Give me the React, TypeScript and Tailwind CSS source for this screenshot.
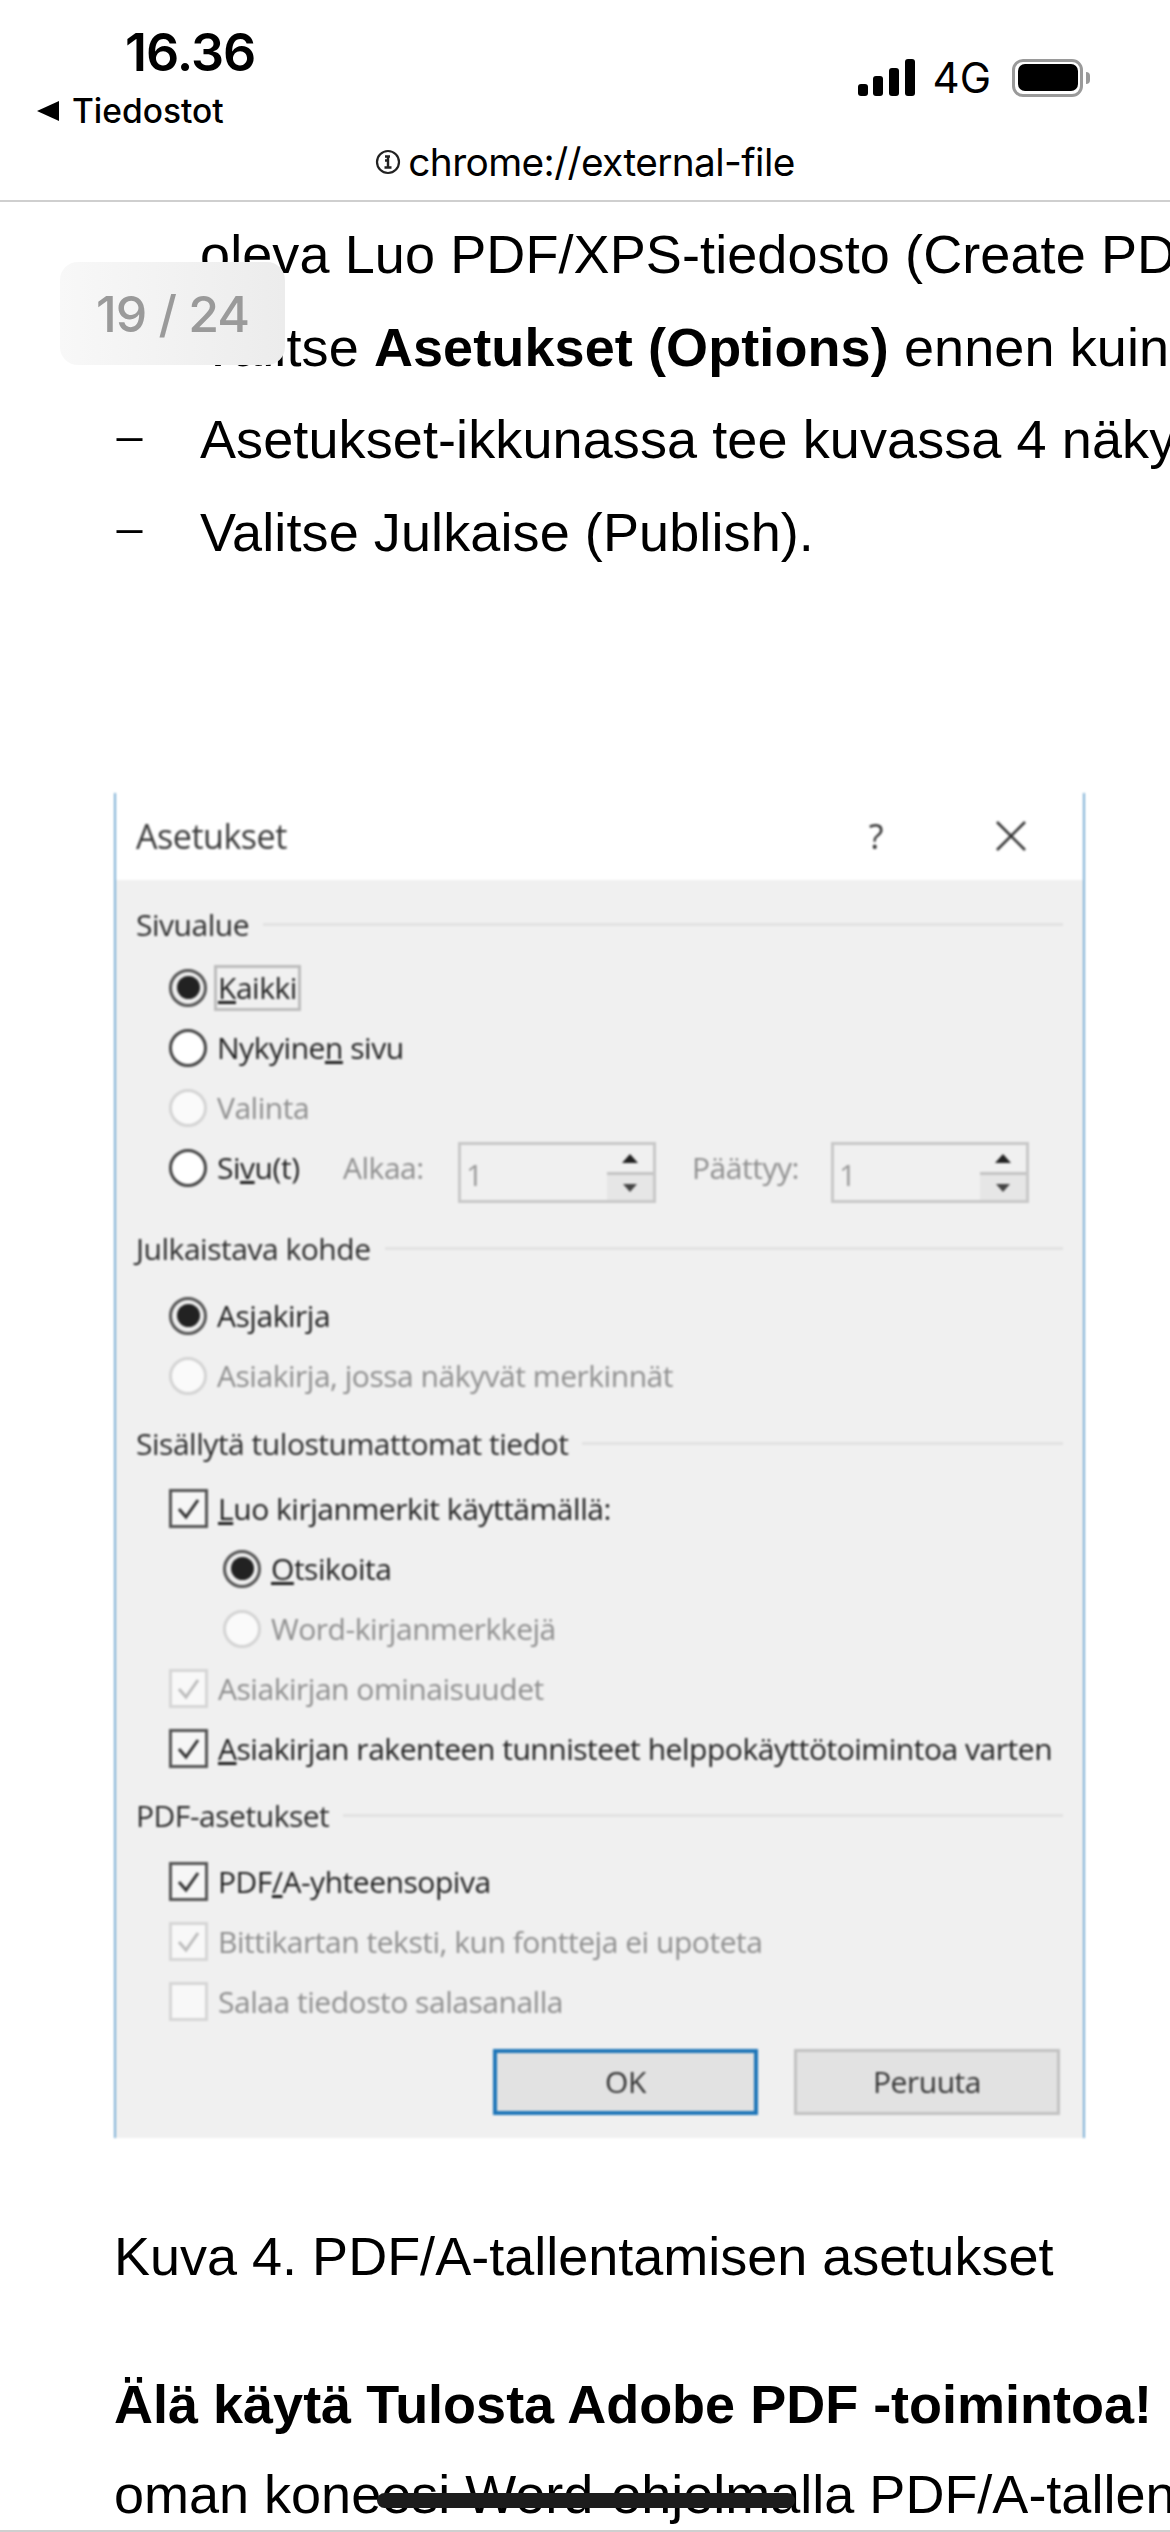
import React from "react";

const seg = "font-['Open_Sans',sans-serif]";

function Radio({ state }: { state: "on" | "off" | "dis" }) {
  if (state === "on")
    return (
      <span className="flex h-[38px] w-[38px] shrink-0 items-center justify-center rounded-full border-[3px] border-[#555] bg-[#eee]">
        <span className="h-[23px] w-[23px] rounded-full bg-[#222]" />
      </span>
    );
  if (state === "off")
    return <span className="h-[38px] w-[38px] shrink-0 rounded-full border-[3px] border-[#444] bg-white" />;
  return <span className="h-[38px] w-[38px] shrink-0 rounded-full border-[3px] border-[#d4d4d4] bg-[#fafafa]" />;
}

function Check({ state }: { state: "on" | "dis" | "empty" }) {
  const box =
    state === "on"
      ? "border-[#555] bg-[#f6f6f6]"
      : "border-[#d6d6d6] bg-[#f8f8f8]";
  return (
    <span className={`flex h-[39px] w-[39px] shrink-0 items-center justify-center border-[3px] ${box}`}>
      {state !== "empty" && (
        <svg width="27" height="27" viewBox="0 0 27 27" fill="none">
          <path d="M4 14 L11 22 L23 5" stroke={state === "on" ? "#333" : "#bdbdbd"} strokeWidth="3" />
        </svg>
      )}
    </span>
  );
}

function Row({ children, indent }: { children: React.ReactNode; indent?: boolean }) {
  return (
    <div className={`flex h-[60px] items-center gap-[10px] ${indent ? "pl-[87px]" : "pl-[33px]"}`}>{children}</div>
  );
}

function Head({ title, cls }: { title: string; cls: string }) {
  return (
    <div className={`flex h-[60px] items-center gap-[14px] text-[#2b2b2b] ${cls}`}>
      <span>{title}</span>
      <span className="h-[3px] flex-1 bg-[#e2e2e2]" />
    </div>
  );
}

function Spin() {
  return (
    <div className="mt-[10px] flex h-[61px] w-[198px] shrink-0 border-[3px] border-[#c8c8c8] bg-[#f0f0f0]">
      <div className="flex flex-1 items-center pl-[5px] pt-[4px] text-[#999]">1</div>
      <div className="flex w-[46px] flex-col items-center bg-[#e6e6e6] text-[#333]">
        <div className="flex h-[30px] w-full items-center justify-center border-b-[3px] border-[#c4c4c4] bg-[#f0f0f0]">
          <span className="h-0 w-0 border-x-[8px] border-b-[9px] border-x-transparent border-b-[#222]" />
        </div>
        <div className="flex flex-1 items-center justify-center">
          <span className="h-0 w-0 border-x-[7px] border-t-[8px] border-x-transparent border-t-[#444]" />
        </div>
      </div>
    </div>
  );
}

function Dialog() {
  const dis = "text-[#8f8f8f]";
  const on = "text-[#1f1f1f]";
  return (
    <div className={`mt-[214px] w-[971px] border-x-2 border-[#7fb0d6] text-[30px] tracking-[-0.47px] blur-[0.9px] ${seg}`}>
      <div className="flex h-[87px] items-center bg-white pl-[20px] pr-[56px] text-[34px] text-[#3a3a3a]">
        <span className="flex-1">Asetukset</span>
        <span className="mr-[112px] text-[#333]">?</span>
        <svg width="32" height="32" viewBox="0 0 32 32" fill="none">
          <path d="M2 2 L30 30 M30 2 L2 30" stroke="#333" strokeWidth="2.6" />
        </svg>
      </div>
      <div className="bg-[#f0f0f0] px-[20px] pb-[23px] pt-[15px]">
        <Head title="Sivualue" cls="mb-[3px]" />
        <Row>
          <Radio state="on" />
          <span className={`-ml-[3px] border-[3px] border-[#bdbdbd] px-[1px] py-[1px] leading-[38px] ${on}`}>
            <u>K</u>aikki
          </span>
        </Row>
        <Row>
          <Radio state="off" />
          <span className={on}>
            Nykyine<u>n</u> sivu
          </span>
        </Row>
        <Row>
          <Radio state="dis" />
          <span className={dis}>Valinta</span>
        </Row>
        <div className="flex h-[60px] items-center pl-[33px]">
          <Radio state="off" />
          <span className={`ml-[10px] w-[126px] ${on}`}>
            Si<u>v</u>u(t)
          </span>
          <span className={`w-[115px] ${dis}`}>Alkaa:</span>
          <Spin />
          <span className={`ml-[36px] w-[139px] ${dis}`}>Päättyy:</span>
          <Spin />
        </div>
        <Head title="Julkaistava kohde" cls="mt-[21px] mb-[7px]" />
        <Row>
          <Radio state="on" />
          <span className={on}>
            As<u>j</u>akirja
          </span>
        </Row>
        <Row>
          <Radio state="dis" />
          <span className={dis}>Asiakirja, jossa näkyvät merkinnät</span>
        </Row>
        <Head title="Sisällytä tulostumattomat tiedot" cls="mt-[8px] mb-[5px]" />
        <Row>
          <Check state="on" />
          <span className={on}>
            <u>L</u>uo kirjanmerkit käyttämällä:
          </span>
        </Row>
        <Row indent>
          <Radio state="on" />
          <span className={on}>
            <u>O</u>tsikoita
          </span>
        </Row>
        <Row indent>
          <Radio state="dis" />
          <span className={dis}>Word-kirjanmerkkejä</span>
        </Row>
        <Row>
          <Check state="dis" />
          <span className={dis}>Asiakirjan ominaisuudet</span>
        </Row>
        <Row>
          <Check state="on" />
          <span className={`whitespace-nowrap ${on}`}>
            <u>A</u>siakirjan rakenteen tunnisteet helppokäyttötoimintoa varten
          </span>
        </Row>
        <Head title="PDF-asetukset" cls="mt-[7px] mb-[6px]" />
        <Row>
          <Check state="on" />
          <span className={on}>
            PDF<u>/</u>A-yhteensopiva
          </span>
        </Row>
        <Row>
          <Check state="dis" />
          <span className={dis}>Bittikartan teksti, kun fontteja ei upoteta</span>
        </Row>
        <Row>
          <Check state="empty" />
          <span className={dis}>Salaa tiedosto salasanalla</span>
        </Row>
        <div className="mt-[17px] flex justify-end gap-[36px] pr-[3px]">
          <div className="flex h-[66px] w-[265px] items-center justify-center border-[4px] border-[#1f76b8] bg-[#e2e2e2] text-[#333]">
            OK
          </div>
          <div className="flex h-[66px] w-[266px] items-center justify-center border-[3px] border-[#c2c2c2] bg-[#e2e2e2] text-[#333]">
            Peruuta
          </div>
        </div>
      </div>
    </div>
  );
}

function Line({ dash, children }: { dash?: boolean; children: React.ReactNode }) {
  return (
    <div className="flex h-[92.7px] items-center whitespace-nowrap">
      <span className="-mt-[14px] w-[86px] shrink-0 font-['Open_Sans',sans-serif] text-[62px] font-light leading-none">
        {dash ? "–" : ""}
      </span>
      <span className="tracking-[0.1px]">{children}</span>
    </div>
  );
}

export default function App() {
  return (
    <div className="relative flex h-[2532px] w-[1170px] flex-col overflow-hidden border-b-2 border-[#cfcfcf] bg-white text-black">
      <header className="flex h-[202px] shrink-0 flex-col border-b-2 border-[#cfcfcf] font-['Inter',sans-serif]">
        <div className="flex h-[130px] justify-between">
          <div className="pl-[37px] pt-[23px]">
            <div className="pl-[88px] text-[52px] font-semibold leading-[60px] tracking-[-1px]">16.36</div>
            <div className="mt-[8px] flex items-center gap-[13px] text-[33.5px] font-medium leading-[40px]">
              <span className="h-0 w-0 border-y-[10px] border-r-[22px] border-y-transparent border-r-black" />
              <span>Tiedostot</span>
            </div>
          </div>
          <div className="flex items-center gap-[18px] pr-[80px] pt-[25px]">
            <svg width="57" height="37" viewBox="0 0 57 37">
              <rect x="0" y="25" width="10" height="12" rx="3" />
              <rect x="15" y="17" width="10" height="20" rx="3" />
              <rect x="31" y="9" width="10" height="28" rx="3" />
              <rect x="47" y="0" width="10" height="37" rx="3" />
            </svg>
            <span className="text-[42px] font-normal leading-none">4G</span>
            <span className="ml-[3px] flex items-center">
              <span className="flex h-[38px] w-[71px] items-center justify-center rounded-[11px] border-[3px] border-[#9a9a9a]">
                <span className="h-[27px] w-[60px] rounded-[7px] bg-black" />
              </span>
              <span className="ml-[3px] h-[12px] w-[4px] rounded-r-full bg-[#9a9a9a]" />
            </span>
          </div>
        </div>
        <div className="flex items-center justify-center gap-[7px] pt-[10px] text-[38.8px] leading-[44px] tracking-[-0.6px]">
          <svg width="26" height="26" viewBox="0 0 26 26" fill="none" stroke="#222">
            <circle cx="13" cy="13" r="11" strokeWidth="2.2" />
            <path d="M10 7.5 H15 M13 7 V18 M9.5 18.5 H16.5 M10 11.5 H13" strokeWidth="2.4" />
          </svg>
          <span>chrome://external-file</span>
        </div>
      </header>

      <main className="flex-1 pl-[114px] pt-[6px] font-['Liberation_Sans',Arial,sans-serif] text-[54px]">
        <Line>oleva Luo PDF/XPS-tiedosto (Create PDF/XPS)</Line>
        <Line dash>
          Valitse <b>Asetukset (Options)</b> ennen kuin
        </Line>
        <Line dash>Asetukset-ikkunassa tee kuvassa 4 näkyvät</Line>
        <Line dash>Valitse Julkaise (Publish).</Line>
        <Dialog />
        <p className="mt-[72px] h-[92px] whitespace-nowrap leading-[92px]">Kuva 4. PDF/A-tallentamisen asetukset</p>
        <p className="mt-[56px] h-[92px] whitespace-nowrap font-bold leading-[92px]">Älä käytä Tulosta Adobe PDF -toimintoa!</p>
        <p className="-mt-[2px] h-[92px] whitespace-nowrap leading-[92px]">oman koneesi Word-ohjelmalla PDF/A-tallennus</p>
      </main>

      <div className="absolute left-[60px] top-[262px] flex h-[103px] w-[225px] items-center justify-center rounded-[18px] bg-gradient-to-r from-[#f8f8f8] to-[#ececec] pt-[2px] font-['Inter',sans-serif] text-[50px] font-medium tracking-[-1px] text-[#9a9a9a]">
        19 / 24
      </div>
      <div className="absolute left-[377px] top-[2493px] h-[15px] w-[418px] rounded-full bg-[#1c1c1c]" />
    </div>
  );
}
